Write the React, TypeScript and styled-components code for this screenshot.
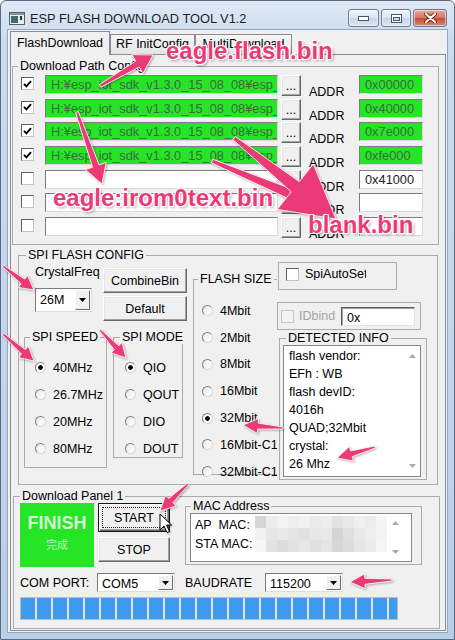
import React from "react";
import styled, { createGlobalStyle, css } from "styled-components";

const PINK = "#ec3a78";
const PANEL = "#f0f0f0";
const GREEN = "#26e426";

const GlobalStyle = createGlobalStyle`
  html, body {
    margin: 0;
    padding: 0;
    background: #fff;
  }
  body {
    font-family: "Liberation Sans", Arial, sans-serif;
    font-size: 12.5px;
    color: #000;
  }
  * {
    box-sizing: border-box;
  }
`;

const Window = styled.div`
  position: relative;
  width: 455px;
  height: 640px;
  display: flex;
  flex-direction: column;
  background: linear-gradient(#dde8f4 0, #cbdcef 40px, #b8cfea 100%);
  border: 1px solid #5c6b80;
  border-radius: 6px 6px 0 0;
  overflow: hidden;
`;

const TitleBar = styled.div`
  height: 29px;
  flex-shrink: 0;
  display: flex;
  align-items: flex-start;
  padding: 0 7px 0 8px;
`;

const AppIcon = styled.svg`
  margin-top: 11px;
  flex-shrink: 0;
`;

const Title = styled.div`
  margin: 10px 0 0 5px;
  font-size: 12.8px;
  line-height: 16px;
  color: #1e1e1e;
`;

const Controls = styled.div`
  margin: 8px 0 0 auto;
  display: flex;
  gap: 2px;
`;

const CapButton = styled.div<{ $w: number; $close?: boolean }>`
  width: ${(p) => p.$w}px;
  height: 18px;
  border: 1px solid #6b7a90;
  border-radius: 3px;
  display: flex;
  align-items: center;
  justify-content: center;
  box-shadow: inset 0 0 0 1px rgba(255, 255, 255, 0.55);
  background: ${(p) =>
    p.$close
      ? "linear-gradient(#eaa999, #d9735f 48%, #c54e39 52%, #d98671)"
      : "linear-gradient(#eff4fa, #dce6f2 48%, #c8d6e7 52%, #d9e4f0)"};
`;

const Client = styled.div`
  flex: 1;
  margin: 0 7px 7px;
  padding-top: 1px;
  background: ${PANEL};
  box-shadow: 0 0 0 1px #93a6bf;
  display: flex;
  flex-direction: column;
`;

const TabStrip = styled.div`
  height: 23px;
  flex-shrink: 0;
  display: flex;
  align-items: flex-end;
  padding-left: 2px;
`;

const Tab = styled.div<{ $w: number; $active?: boolean }>`
  width: ${(p) => p.$w}px;
  height: 20px;
  border: 1px solid #898c95;
  border-bottom: none;
  background: linear-gradient(#f6f6f6, #e4e4e4);
  text-align: center;
  line-height: 19px;
  white-space: nowrap;
  overflow: hidden;
  ${(p) =>
    p.$active &&
    css`
      height: 24px;
      margin-bottom: -1px;
      background: ${PANEL};
      line-height: 22px;
      position: relative;
      z-index: 1;
    `}
`;

const TabPanel = styled.div`
  flex: 1;
  margin: 0 1px 1px 2px;
  border: 1px solid #898c95;
  display: flex;
  flex-direction: column;
`;

const Group = styled.div<{ $w: number; $h: number }>`
  width: ${(p) => p.$w}px;
  height: ${(p) => p.$h}px;
  flex-shrink: 0;
  border: 1px solid #ababab;
`;

const Caption = styled.div<{ $x: number }>`
  width: fit-content;
  margin: -8px 0 0 ${(p) => p.$x}px;
  padding: 0 2px;
  height: 14px;
  line-height: 14px;
  background: ${PANEL};
  white-space: nowrap;
`;

/* ---------- Download Path Config ---------- */

const PathGroup = styled(Group)`
  margin: 11px 0 0 1px;
`;

const PathRows = styled.div`
  margin-top: -1px;
`;

const PathRow = styled.div`
  display: flex;
  align-items: flex-start;
  height: 23.7px;
`;

const Check = styled.span<{ $disabled?: boolean }>`
  width: 13px;
  height: 13px;
  flex-shrink: 0;
  display: inline-flex;
  align-items: center;
  justify-content: center;
  border: 1px solid;
  border-color: ${(p) =>
    p.$disabled ? "#c6c6c6" : "#5f5f5f #c4c4c4 #c4c4c4 #5f5f5f"};
  background: ${(p) => (p.$disabled ? "#f3f3f3" : "#fff")};
`;

const PathCheck = styled(Check)`
  margin: 5px 0 0 8px;
`;

const Field = styled.div<{ $w: number; $filled?: boolean }>`
  width: ${(p) => p.$w}px;
  height: 19px;
  flex-shrink: 0;
  border: 1px solid;
  border-color: #7c7c7c #dadada #dadada #7c7c7c;
  background: ${(p) => (p.$filled ? GREEN : "#fff")};
  color: ${(p) => (p.$filled ? "#3f6a3f" : "#1a1a1a")};
  padding-left: 5px;
  font-size: 12.8px;
  line-height: 17px;
  white-space: nowrap;
  overflow: hidden;
`;

const PathField = styled(Field)`
  margin: 3px 0 0 11px;
`;

const AddrField = styled(Field)`
  margin-top: 3px;
`;

const Button = styled.div<{ $focused?: boolean }>`
  display: flex;
  align-items: center;
  justify-content: center;
  flex-shrink: 0;
  background: ${PANEL};
  border: 1px solid;
  border-color: #fff #696969 #696969 #fff;
  box-shadow: inset -1px -1px #a0a0a0, inset 1px 1px #e6e6e6;
  white-space: nowrap;
  ${(p) =>
    p.$focused &&
    css`
      border: 1px solid #151515;
      box-shadow: inset 1px 1px #fff, inset -1px -1px #696969,
        inset -2px -2px #a0a0a0;
      outline: 1px dotted #222;
      outline-offset: -5px;
    `}
`;

const DotsButton = styled(Button)`
  width: 20px;
  height: 21px;
  margin: 3px 0 0 3px;
  align-items: flex-end;
  padding-bottom: 5px;
  line-height: 8px;
`;

const AddrLabel = styled.div`
  width: 50px;
  margin: 13px 0 0 8px;
  line-height: 14px;
`;

/* ---------- SPI FLASH CONFIG ---------- */

const SpiGroup = styled(Group)`
  margin: 10px 0 0 7px;
`;

const SpiBody = styled.div`
  display: flex;
  align-items: flex-start;
  padding-left: 5px;
`;

const LeftCol = styled.div`
  width: 163px;
  flex-shrink: 0;
`;

const TopRow = styled.div`
  display: flex;
  height: 63px;
`;

const CrystalCol = styled.div`
  margin-left: 11px;
  width: 57px;
`;

const FieldLabel = styled.div`
  margin-top: 3px;
  line-height: 14px;
  white-space: nowrap;
`;

const ButtonCol = styled.div`
  margin-left: 11px;
  width: 84px;
  display: flex;
  flex-direction: column;
`;

const CombineButton = styled(Button)`
  height: 25px;
  margin-top: 6px;
`;

const DefaultButton = styled(Button)`
  height: 25px;
  margin-top: 3px;
`;

const ComboBox = styled.div<{ $w: number; $h: number }>`
  width: ${(p) => p.$w}px;
  height: ${(p) => p.$h}px;
  flex-shrink: 0;
  display: flex;
  border: 1px solid;
  border-color: #7a7a7a #dedede #dedede #7a7a7a;
  background: #fff;
  padding: 1px;
`;

const ComboText = styled.span<{ $low?: boolean }>`
  flex: 1;
  padding: ${(p) => (p.$low ? "3px" : "0")} 0 0 3px;
  display: flex;
  align-items: center;
  white-space: nowrap;
`;

const ComboArrow = styled.span`
  width: 15px;
  display: flex;
  align-items: center;
  justify-content: center;
  border: 1px solid;
  border-color: #fff #6a6a6a #6a6a6a #fff;
  background: ${PANEL};
`;

const CrystalCombo = styled(ComboBox)`
  margin-top: 9px;
`;

const ModeRow = styled.div`
  display: flex;
  align-items: flex-start;
  margin-top: 12px;
`;

const ModeGroup = styled(Group)`
  margin-left: 6px;
`;

const RadioList = styled.div<{ $pt: number; $pl: number; $clip?: number }>`
  padding: ${(p) => p.$pt}px 0 0 ${(p) => p.$pl}px;
  ${(p) =>
    p.$clip &&
    css`
      width: ${p.$clip}px;
      overflow: hidden;
    `}
`;

const RadioRow = styled.div<{ $h: number }>`
  height: ${(p) => p.$h}px;
  display: flex;
  align-items: center;
  gap: 7px;
  white-space: nowrap;
`;

const RadioDot = styled.span<{ $on?: boolean }>`
  width: 11px;
  height: 11px;
  flex-shrink: 0;
  border-radius: 50%;
  border: 1px solid;
  border-color: #7e7e7e #d8d8d8 #d8d8d8 #7e7e7e;
  background: ${(p) =>
    p.$on
      ? "radial-gradient(circle, #000 0 2px, #fff 2.6px)"
      : "linear-gradient(135deg, #e9e9e9, #fff)"};
`;

const SizeGroup = styled(Group)`
  margin: 17px 0 0 6px;
  border-right: none;
`;

const RightCol = styled.div`
  width: 150px;
  flex-shrink: 0;
  display: flex;
  flex-direction: column;
  position: relative;
  z-index: 1;
`;

const AutoBox = styled.div`
  margin-left: 1px;
  width: 119px;
  height: 28px;
  border: 1px solid #ababab;
  display: flex;
  align-items: flex-start;
  gap: 6px;
  padding: 5px 0 0 7px;
`;

const AutoLabel = styled.span`
  width: 61px;
  overflow: hidden;
  white-space: nowrap;
  line-height: 12px;
`;

const BindBox = styled.div`
  margin-top: 12px;
  width: 144px;
  height: 28px;
  border: 1px solid #ababab;
  display: flex;
  align-items: center;
  padding-left: 3px;
`;

const BindLabel = styled.span`
  width: 40px;
  margin-left: 5px;
  color: #a2a2a2;
`;

const BindInput = styled.div`
  width: 74px;
  height: 19px;
  margin-left: 2px;
  border: 1px solid;
  border-color: #5d5d5d #e3e3e3 #e3e3e3 #5d5d5d;
  box-shadow: inset 1px 1px #a0a0a0;
  background: #fff;
  padding: 3px 0 0 5px;
  line-height: 14px;
`;

const InfoGroup = styled(Group)`
  margin: 8px 0 0 2px;
`;

const TextBox = styled.div<{ $w: number; $h: number }>`
  width: ${(p) => p.$w}px;
  height: ${(p) => p.$h}px;
  border: 1px solid #828790;
  background: #fff;
  display: flex;
`;

const InfoBox = styled(TextBox)`
  margin-left: 3px;
`;

const InfoText = styled.div`
  flex: 1;
  padding: 1px 0 0 5px;
  line-height: 18px;
  white-space: nowrap;
`;

const ScrollCol = styled.div<{ $pad: number }>`
  width: 16px;
  display: flex;
  flex-direction: column;
  justify-content: space-between;
  align-items: center;
  padding: ${(p) => p.$pad}px 0;
`;

/* ---------- Download Panel ---------- */

const PanelGroup = styled(Group)`
  margin: 11px 0 0 2px;
`;

const PanelBody = styled.div`
  padding-left: 6px;
`;

const PanelTop = styled.div`
  display: flex;
  align-items: flex-start;
  height: 64px;
`;

const FinishBox = styled.div`
  width: 74px;
  height: 64px;
  background: ${GREEN};
  display: flex;
  flex-direction: column;
  align-items: center;
  padding-top: 10px;
`;

const FinishText = styled.div`
  font-weight: bold;
  font-size: 18px;
  line-height: 20px;
  color: #d4fbd4;
`;

const DoneText = styled.div`
  margin-top: 3px;
  font-family: "Noto Sans CJK JP", sans-serif;
  font-size: 11px;
  line-height: 16px;
  color: #c2f3c2;
`;

const StartCol = styled.div`
  margin-left: 4px;
  width: 72px;
  display: flex;
  flex-direction: column;
`;

const StartButton = styled(Button)`
  height: 29px;
`;

const StopButton = styled(Button)`
  height: 25px;
  margin-top: 5px;
`;

const MacGroup = styled(Group)`
  margin: 3px 0 0 15px;
`;

const MacBox = styled(TextBox)`
  margin-left: 4px;
`;

const MacLabels = styled.div`
  width: 64px;
  padding: 2px 0 0 4px;
  line-height: 19px;
  white-space: nowrap;
`;

const Mosaic = styled.div`
  margin-top: 2px;
  display: grid;
  grid-template-columns: repeat(12, 11px);
  grid-auto-rows: 12px;
`;

const PanelRow = styled.div`
  margin-top: 6px;
  height: 19px;
  display: flex;
  align-items: center;
`;

const RowLabel = styled.span<{ $w: number; $ml?: number }>`
  width: ${(p) => p.$w}px;
  margin-left: ${(p) => p.$ml ?? 0}px;
  white-space: nowrap;
`;

const Progress = styled.div`
  margin-top: 5px;
  width: 378px;
  height: 23px;
  border: 1px solid #bdbdbd;
  background: #e6e6e6;
  display: flex;
  gap: 2px;
  overflow: hidden;
`;

const Segment = styled.span`
  width: 14px;
  flex-shrink: 0;
  background: #3d9cf2;
`;

/* ---------- annotations ---------- */

const Layer = styled.div`
  position: absolute;
  top: -1px;
  left: -1px;
  width: 455px;
  height: 640px;
  pointer-events: none;
  z-index: 5;
`;

const ArrowSvg = styled.svg`
  position: absolute;
  top: 0;
  left: 0;
  filter: drop-shadow(1px 1px 1px rgba(0, 0, 0, 0.3));
`;

const Note = styled.div<{ $x: number; $y: number }>`
  position: absolute;
  left: ${(p) => p.$x}px;
  top: ${(p) => p.$y}px;
  font-family: "Liberation Sans", Arial, sans-serif;
  font-weight: bold;
  font-size: 24px;
  line-height: 28px;
  color: ${PINK};
  white-space: nowrap;
  text-shadow: 1px 0 #fff, -1px 0 #fff, 0 1px #fff, 0 -1px #fff, 1px 1px #fff,
    -1px -1px #fff, 1px -1px #fff, -1px 1px #fff, 2px 2px 3px rgba(0, 0, 0, 0.35);
`;

type Pt = [number, number];

function arrowPoints(t: Pt, p: Pt, hl: number, hw: number, s0: number, s1: number) {
  const dx = p[0] - t[0];
  const dy = p[1] - t[1];
  const len = Math.hypot(dx, dy);
  const ux = dx / len;
  const uy = dy / len;
  const nx = -uy;
  const ny = ux;
  const bx = p[0] - ux * hl;
  const by = p[1] - uy * hl;
  const pts: Pt[] = [
    [t[0] + (nx * s0) / 2, t[1] + (ny * s0) / 2],
    [bx + (nx * s1) / 2, by + (ny * s1) / 2],
    [bx + (nx * hw) / 2, by + (ny * hw) / 2],
    p,
    [bx - (nx * hw) / 2, by - (ny * hw) / 2],
    [bx - (nx * s1) / 2, by - (ny * s1) / 2],
    [t[0] - (nx * s0) / 2, t[1] - (ny * s0) / 2],
  ];
  return pts.map((q) => q[0].toFixed(1) + "," + q[1].toFixed(1)).join(" ");
}

const arrows: { t: Pt; p: Pt; hl: number; hw: number; s0: number; s1: number }[] = [
  { t: [100, 86], p: [153, 55], hl: 18, hw: 22, s0: 3, s1: 7 },
  { t: [77, 112], p: [102, 184], hl: 19, hw: 22, s0: 3, s1: 7 },
  { t: [212, 161], p: [300, 198], hl: 0, hw: 0, s0: 4, s1: 11 },
  { t: [234, 138], p: [336, 219], hl: 52, hw: 58, s0: 4, s1: 13 },
  { t: [3, 266], p: [34, 290], hl: 14, hw: 15, s0: 2, s1: 6 },
  { t: [3, 334], p: [34, 361], hl: 14, hw: 15, s0: 2, s1: 6 },
  { t: [100, 330], p: [126, 358], hl: 14, hw: 15, s0: 2, s1: 6 },
  { t: [283, 428], p: [243, 425], hl: 15, hw: 15, s0: 2, s1: 6 },
  { t: [375, 447], p: [337, 458], hl: 15, hw: 15, s0: 2, s1: 6 },
  { t: [188, 484], p: [160, 511], hl: 15, hw: 15, s0: 2, s1: 6 },
  { t: [392, 580], p: [350, 582], hl: 15, hw: 15, s0: 2, s1: 6 },
];

/* ---------- data ---------- */

const paths = [
  { on: true, path: "H:¥esp_iot_sdk_v1.3.0_15_08_08¥esp_iot_sdk_v1.3.0¥bin¥eagle.flash.bin", addr: "0x00000" },
  { on: true, path: "H:¥esp_iot_sdk_v1.3.0_15_08_08¥esp_iot_sdk_v1.3.0¥bin¥eagle.irom0text.bin", addr: "0x40000" },
  { on: true, path: "H:¥esp_iot_sdk_v1.3.0_15_08_08¥esp_iot_sdk_v1.3.0¥bin¥esp_init_data_default.bin", addr: "0x7e000" },
  { on: true, path: "H:¥esp_iot_sdk_v1.3.0_15_08_08¥esp_iot_sdk_v1.3.0¥bin¥blank.bin", addr: "0xfe000" },
  { on: false, path: "", addr: "0x41000" },
  { on: false, path: "", addr: "" },
  { on: false, path: "", addr: "" },
];

const speeds = ["40MHz", "26.7MHz", "20MHz", "80MHz"];
const modes = ["QIO", "QOUT", "DIO", "DOUT"];
const sizes = ["4Mbit", "2Mbit", "8Mbit", "16Mbit", "32Mbit", "16Mbit-C1", "32Mbit-C1"];
const detected = ["flash vendor:", "EFh : WB", "flash devID:", "4016h", "QUAD;32Mbit", "crystal:", "26 Mhz"];

const MOSAIC = [
  "#d6d6d6", "#ececec", "#f3f3f3", "#eeeeee", "#f1f1f1", "#ebebeb", "#eeeeee", "#e2e2e2", "#e9e9e9", "#f0f0f0", "#ececec", "#f5f5f5",
  "#f2f2f2", "#e6e6e6", "#e9e9e9", "#e4e4e4", "#e1e1e1", "#e7e7e7", "#e9e9e9", "#d5d5d5", "#dedede", "#e8e8e8", "#ededed", "#f4f4f4",
  "#f6f6f6", "#e3e3e3", "#dcdcdc", "#e2e2e2", "#e6e6e6", "#dfdfdf", "#e5e5e5", "#d7d7d7", "#dcdcdc", "#e6e6e6", "#eaeaea", "#f6f6f6",
];

function CheckMark() {
  return (
    <svg width="9" height="8" viewBox="0 0 9 8">
      <path d="M1 3.8 L3.4 6.3 L8 1.2" fill="none" stroke="#000" strokeWidth="1.9" />
    </svg>
  );
}

function DownTri() {
  return (
    <svg width="7" height="4" viewBox="0 0 7 4">
      <path d="M0 0 H7 L3.5 4 Z" fill="#000" />
    </svg>
  );
}

function Combo({ value, w, h, low }: { value: string; w: number; h: number; low?: boolean }) {
  return (
    <ComboBox $w={w} $h={h}>
      <ComboText $low={low}>{value}</ComboText>
      <ComboArrow>
        <DownTri />
      </ComboArrow>
    </ComboBox>
  );
}

function ScrollArrows({ pad }: { pad: number }) {
  return (
    <ScrollCol $pad={pad}>
      <svg width="7" height="4" viewBox="0 0 7 4">
        <path d="M0 4 H7 L3.5 0 Z" fill="#a8a8a8" />
      </svg>
      <svg width="7" height="4" viewBox="0 0 7 4">
        <path d="M0 0 H7 L3.5 4 Z" fill="#a8a8a8" />
      </svg>
    </ScrollCol>
  );
}

function Radios({ items, on, h }: { items: string[]; on: string; h: number }) {
  return (
    <>
      {items.map((it) => (
        <RadioRow key={it} $h={h}>
          <RadioDot $on={it === on} />
          {it}
        </RadioRow>
      ))}
    </>
  );
}

export default function App() {
  return (
    <>
      <GlobalStyle />
      <Window>
        <TitleBar>
          <AppIcon width="16" height="13" viewBox="0 0 16 13">
            <rect x="0.5" y="0.5" width="15" height="12" fill="#e9edf0" stroke="#55606b" />
            <rect x="1" y="1" width="14" height="2" fill="#8795a1" />
            <rect x="2" y="4" width="7" height="7" fill="#3d6b68" />
            <rect x="11" y="4" width="2" height="4" fill="#2b2b2b" />
          </AppIcon>
          <Title>ESP FLASH DOWNLOAD TOOL V1.2</Title>
          <Controls>
            <CapButton $w={31}>
              <svg width="11" height="5" viewBox="0 0 11 5">
                <rect x="0.5" y="0.5" width="10" height="4" fill="#fff" stroke="#47586e" />
              </svg>
            </CapButton>
            <CapButton $w={30}>
              <svg width="11" height="9" viewBox="0 0 11 9">
                <rect x="0.5" y="0.5" width="10" height="8" fill="#fff" stroke="#47586e" />
                <rect x="2.5" y="3.5" width="6" height="3" fill="#cdd8e6" stroke="#47586e" />
              </svg>
            </CapButton>
            <CapButton $w={34} $close>
              <svg width="13" height="10" viewBox="0 0 13 10">
                <path d="M2 1 L11 9 M11 1 L2 9" stroke="#6b2a1f" strokeWidth="4" strokeLinecap="round" />
                <path d="M2 1 L11 9 M11 1 L2 9" stroke="#fff" strokeWidth="2.2" strokeLinecap="round" />
              </svg>
            </CapButton>
          </Controls>
        </TitleBar>

        <Client>
          <TabStrip>
            <Tab $w={100} $active>
              FlashDownload
            </Tab>
            <Tab $w={85}>RF InitConfig</Tab>
            <Tab $w={97}>MultiDownload</Tab>
          </TabStrip>

          <TabPanel>
            <PathGroup $w={427} $h={179}>
              <Caption $x={5}>Download Path Config</Caption>
              <PathRows>
                {paths.map((r, i) => (
                  <PathRow key={i}>
                    <PathCheck>{r.on && <CheckMark />}</PathCheck>
                    <PathField $w={233} $filled={r.on && !!r.path}>
                      {r.path}
                    </PathField>
                    <DotsButton>...</DotsButton>
                    <AddrLabel>ADDR</AddrLabel>
                    <AddrField $w={64} $filled={r.on}>
                      {r.addr}
                    </AddrField>
                  </PathRow>
                ))}
              </PathRows>
            </PathGroup>

            <SpiGroup $w={420} $h={230}>
              <Caption $x={7}>SPI FLASH CONFIG</Caption>
              <SpiBody>
                <LeftCol>
                  <TopRow>
                    <CrystalCol>
                      <FieldLabel>CrystalFreq</FieldLabel>
                      <CrystalCombo $w={57} $h={24}>
                        <ComboText>26M</ComboText>
                        <ComboArrow>
                          <DownTri />
                        </ComboArrow>
                      </CrystalCombo>
                    </CrystalCol>
                    <ButtonCol>
                      <CombineButton>CombineBin</CombineButton>
                      <DefaultButton>Default</DefaultButton>
                    </ButtonCol>
                  </TopRow>
                  <ModeRow>
                    <Group $w={83} $h={131}>
                      <Caption $x={5}>SPI SPEED</Caption>
                      <RadioList $pt={10} $pl={10}>
                        <Radios items={speeds} on="40MHz" h={27} />
                      </RadioList>
                    </Group>
                    <ModeGroup $w={70} $h={121}>
                      <Caption $x={6}>SPI MODE</Caption>
                      <RadioList $pt={10} $pl={11}>
                        <Radios items={modes} on="QIO" h={27} />
                      </RadioList>
                    </ModeGroup>
                  </ModeRow>
                </LeftCol>

                <SizeGroup $w={84} $h={196}>
                  <Caption $x={4}>FLASH SIZE</Caption>
                  <RadioList $pt={11.5} $pl={8} $clip={83}>
                    <Radios items={sizes} on="32Mbit" h={26.8} />
                  </RadioList>
                </SizeGroup>

                <RightCol>
                  <AutoBox>
                    <Check />
                    <AutoLabel>SpiAutoSet</AutoLabel>
                  </AutoBox>
                  <BindBox>
                    <Check $disabled />
                    <BindLabel>IDbind</BindLabel>
                    <BindInput>0x</BindInput>
                  </BindBox>
                  <InfoGroup $w={148} $h={142}>
                    <Caption $x={6}>DETECTED INFO</Caption>
                    <InfoBox $w={138} $h={132}>
                      <InfoText>
                        {detected.map((d) => (
                          <div key={d}>{d}</div>
                        ))}
                      </InfoText>
                      <ScrollArrows pad={8} />
                    </InfoBox>
                  </InfoGroup>
                </RightCol>
              </SpiBody>
            </SpiGroup>

            <PanelGroup $w={427} $h={133}>
              <Caption $x={6}>Download Panel 1</Caption>
              <PanelBody>
                <PanelTop>
                  <FinishBox>
                    <FinishText>FINISH</FinishText>
                    <DoneText>完成</DoneText>
                  </FinishBox>
                  <StartCol>
                    <StartButton $focused>START</StartButton>
                    <StopButton>STOP</StopButton>
                  </StartCol>
                  <MacGroup $w={237} $h={59}>
                    <Caption $x={5}>MAC Address</Caption>
                    <MacBox $w={222} $h={49}>
                      <MacLabels>
                        <div>AP&nbsp;&nbsp;MAC:</div>
                        <div>STA MAC:</div>
                      </MacLabels>
                      <Mosaic>
                        {MOSAIC.map((c, i) => (
                          <span key={i} style={{ background: c }} />
                        ))}
                      </Mosaic>
                      <ScrollArrows pad={7} />
                    </MacBox>
                  </MacGroup>
                </PanelTop>
                <PanelRow>
                  <RowLabel $w={77}>COM PORT:</RowLabel>
                  <Combo value="COM5" w={78} h={19} low />
                  <RowLabel $w={80} $ml={10}>
                    BAUDRATE
                  </RowLabel>
                  <Combo value="115200" w={78} h={19} low />
                </PanelRow>
                <Progress>
                  {Array.from({ length: 24 }).map((_, i) => (
                    <Segment key={i} />
                  ))}
                </Progress>
              </PanelBody>
            </PanelGroup>
          </TabPanel>
        </Client>

        <Layer>
          <ArrowSvg width="455" height="640" viewBox="0 0 455 640">
            {arrows.map((a, i) => (
              <polygon
                key={i}
                points={arrowPoints(a.t, a.p, a.hl, a.hw, a.s0, a.s1)}
                fill={PINK}
                stroke="rgba(255,255,255,0.85)"
                strokeWidth="1"
                strokeLinejoin="round"
              />
            ))}
            <path
              d="M160 514 L160 530 L164 526 L167 532.5 L169.5 531.5 L166.5 525 L171.5 525 Z"
              fill="#fff"
              stroke="#000"
              strokeWidth="1"
              strokeLinejoin="round"
            />
          </ArrowSvg>
          <Note $x={166} $y={37}>eagle.flash.bin</Note>
          <Note $x={53} $y={184}>eagle:irom0text.bin</Note>
          <Note $x={308} $y={211}>blank.bin</Note>
        </Layer>
      </Window>
    </>
  );
}
